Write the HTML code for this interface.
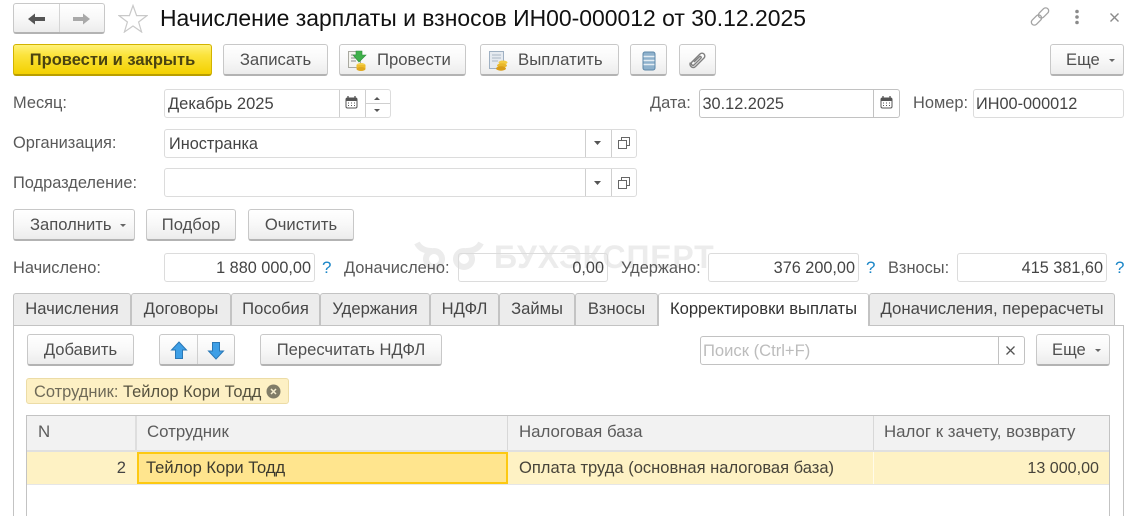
<!DOCTYPE html>
<html lang="ru"><head><meta charset="utf-8"><title>Начисление зарплаты</title>
<style>
html,body{margin:0;padding:0;background:#fff}
#p{position:relative;width:1129px;height:516px;overflow:hidden;background:#fff;font-family:"Liberation Sans",sans-serif;font-size:16.6px;color:#4d4d4d;filter:blur(.35px)}
#p>*{position:absolute;box-sizing:border-box}
.t{white-space:nowrap;line-height:22px}
.l{color:#595959;white-space:nowrap;line-height:22px;font-size:16.4px}
.b{height:32px;border:1px solid #c8c8c8;border-bottom:2px solid #b3b3b3;border-radius:3px;background:linear-gradient(#fff,#f8f8f8 50%,#ececec);text-align:center;line-height:30px;color:#4f4f4f;white-space:nowrap}
.f{height:29px;border:1px solid #dcdcdc;border-radius:3px;background:#fff;line-height:28px;padding:0 3px;color:#444;white-space:nowrap;font-size:16.3px}
.f.r{text-align:right;padding-right:3px;font-size:16.25px}
.d{width:1px;background:#cfcfcf}
.q{color:#1b86c7;line-height:22px;font-size:17px}
.tab{top:293px;height:32px;background:#ececec;border:1px solid #c3c3c3;border-bottom:0;border-radius:3px 3px 0 0;text-align:center;line-height:30px;color:#474747;white-space:nowrap}
.h{color:#5c5c5c;font-size:16.85px}
.v{font-size:16.55px}
.c1{font-size:16.7px}
</style></head><body><div id="p">

<!-- nav -->
<div class="b" style="left:13px;top:3px;width:92px;height:31px"></div>
<div class="d" style="left:59px;top:4px;height:28px;background:#d5d5d5"></div>
<svg style="left:27px;top:11px" width="20" height="16"><path d="M1 8L8 2.500V6H18V10H8V13.500Z" fill="#555"/></svg>
<svg style="left:71px;top:11px" width="20" height="16"><path d="M19 8L12 2.500V6H2V10H12V13.500Z" fill="#a9a9a9"/></svg>
<svg style="left:118px;top:4px" width="30" height="29"><path d="M15 1.500L18.600 11.600H29L20.600 18L23.600 28L15 22L6.400 28L9.400 18L1 11.600H11.400Z" fill="#fff" stroke="#c9c9c9" stroke-width="1.200"/></svg>
<div class="t" style="left:160px;top:4px;font-size:22.930px;line-height:28px;color:#111">Начисление зарплаты и взносов ИН00-000012 от 30.12.2025</div>
<svg style="left:1029px;top:6px" width="22" height="21" fill="none" stroke="#a3a3a3" stroke-width="1.300"><g transform="rotate(-45 11 10.500)"><rect x="0" y="7.500" width="12" height="6" rx="3"/><rect x="10" y="7.500" width="12" height="6" rx="3"/></g></svg>
<svg style="left:1073px;top:9px" width="8" height="16" fill="#8a8a8a"><circle cx="4" cy="2.500" r="1.800"/><circle cx="4" cy="8" r="1.800"/><circle cx="4" cy="13.500" r="1.800"/></svg>
<svg style="left:1109px;top:12px" width="11" height="11" stroke="#8a8a8a" stroke-width="1.400"><path d="M1.500 1.500L9.500 9.500M9.500 1.500L1.500 9.500"/></svg>

<!-- toolbar -->
<div class="b" style="left:13px;top:44px;width:199px;background:linear-gradient(#fff27a,#fbe33c 35%,#f3d000);border-color:#d2b300 #d2b300 #b99e00;font-weight:bold;color:#4a4310;font-size:16.500px">Провести и закрыть</div>
<div class="b c1" style="left:223px;top:44px;width:105px">Записать</div>
<div class="b c1" style="left:339px;top:44px;width:127px;text-align:left;padding-left:37px">Провести</div>
<svg style="left:347px;top:50px" width="22" height="22"><rect x="1.500" y="1.500" width="12" height="16" fill="#f4f4ee" stroke="#a9a9a0"/><path d="M4 5h7M4 8h5M4 11h5" stroke="#888"/><path d="M9 1h6v4h4l-7 7-6-7h3z" fill="#3fb04a" stroke="#2d8e3a" stroke-width=".6"/><ellipse cx="14" cy="15" rx="4.500" ry="2" fill="#f2cf4a"/><rect x="9.500" y="15" width="9" height="4" fill="#eebd2e"/><ellipse cx="14" cy="19" rx="4.500" ry="2" fill="#e0a91e"/></svg>
<div class="b" style="left:480px;top:44px;width:139px;text-align:left;padding-left:37px;font-size:16.800px">Выплатить</div>
<svg style="left:488px;top:50px" width="22" height="22"><rect x="1.500" y="1.500" width="14" height="17" fill="#e5eaf0" stroke="#9fb0c2"/><path d="M4 5h9M4 8h9M4 11h6" stroke="#a9b6c4"/><ellipse cx="15" cy="12.500" rx="4.500" ry="2" fill="#f3cb42"/><ellipse cx="14" cy="15.500" rx="5" ry="2.200" fill="#e9b82c"/><ellipse cx="13" cy="18.500" rx="5" ry="2.200" fill="#d99d18"/></svg>
<div class="b" style="left:630px;top:44px;width:37px"></div>
<svg style="left:642px;top:51px" width="14" height="20"><rect x="1" y="1" width="12" height="18" rx="2" fill="#8eb1cc" stroke="#5d87a8"/><path d="M1.500 5.500h11M1.500 9.500h11M1.500 13.500h11" stroke="#e4edf3" stroke-width="1.400"/></svg>
<div class="b" style="left:679px;top:44px;width:37px"></div>
<svg style="left:688px;top:50px" width="20" height="20" fill="none" stroke="#808080" stroke-width="1.400"><path d="M7 17L16 8a2.800 2.800 0 0 0-4-4L3.500 12.500a1.800 1.800 0 0 0 2.500 2.500L13 8a1 1 0 0 0-1.400-1.400L6 12"/><path d="M7 17a3.300 3.300 0 0 1-4.500-4.500"/></svg>
<div class="b" style="left:1050px;top:44px;width:74px;text-align:left;padding-left:15px">Еще</div>
<svg style="left:1109px;top:59px" width="7" height="4"><path d="M0 0h6L3 3z" fill="#666"/></svg>

<!-- row 1 -->
<div class="l" style="left:13px;top:92px">Месяц:</div>
<div class="f" style="left:164px;top:89px;width:227px;font-size:16.5px">Декабрь 2025</div>
<div class="d" style="left:339px;top:90px;height:27px"></div>
<div class="d" style="left:365px;top:90px;height:27px"></div>
<div class="d" style="left:366px;top:103px;height:1px;width:24px"></div>
<svg style="left:345px;top:96px" width="13" height="13"><rect x="1" y="2" width="11" height="10" rx="1.500" fill="#fff" stroke="#555"/><rect x="1" y="2" width="11" height="3" fill="#555"/><path d="M3 0v3M10 0v3" stroke="#555" stroke-width="1.300"/><path d="M3 7h1M6 7h1M9 7h1M3 9.500h1M6 9.500h1M9 9.500h1" stroke="#555"/></svg>
<svg style="left:374px;top:97px" width="7" height="4"><path d="M3 0L6 3H0z" fill="#555"/></svg>
<svg style="left:374px;top:109px" width="7" height="4"><path d="M0 0h6L3 3z" fill="#555"/></svg>
<div class="l" style="left:650px;top:92px">Дата:</div>
<div class="f" style="left:699px;top:89px;width:201px;border-color:#c2c2c2;padding-left:2.500px">30.12.2025</div>
<div class="d" style="left:873px;top:90px;height:27px;background:#c2c2c2"></div>
<svg style="left:880px;top:96px" width="13" height="13"><rect x="1" y="2" width="11" height="10" rx="1.500" fill="#fff" stroke="#555"/><rect x="1" y="2" width="11" height="3" fill="#555"/><path d="M3 0v3M10 0v3" stroke="#555" stroke-width="1.300"/><path d="M3 7h1M6 7h1M9 7h1M3 9.500h1M6 9.500h1M9 9.500h1" stroke="#555"/></svg>
<div class="l" style="left:913px;top:92px">Номер:</div>
<div class="f" style="left:973px;top:89px;width:151px;padding-left:2px">ИН00-000012</div>

<!-- row 2 -->
<div class="l" style="left:13px;top:132px">Организация:</div>
<div class="f" style="left:164px;top:129px;width:473px;padding-left:4px">Иностранка</div>
<div class="d" style="left:585px;top:130px;height:27px"></div>
<div class="d" style="left:611px;top:130px;height:27px"></div>
<svg style="left:594px;top:141px" width="8" height="5"><path d="M0 0h7L3.500 4z" fill="#555"/></svg>
<svg style="left:617px;top:136px" width="14" height="14" fill="#fff" stroke="#666"><rect x="4.500" y="1.500" width="8" height="8"/><rect x="1.500" y="4.500" width="8" height="8"/></svg>

<!-- row 3 -->
<div class="l" style="left:13px;top:172px">Подразделение:</div>
<div class="f" style="left:164px;top:168px;width:473px"></div>
<div class="d" style="left:585px;top:169px;height:27px"></div>
<div class="d" style="left:611px;top:169px;height:27px"></div>
<svg style="left:594px;top:181px" width="8" height="5"><path d="M0 0h7L3.500 4z" fill="#555"/></svg>
<svg style="left:617px;top:176px" width="14" height="14" fill="#fff" stroke="#666"><rect x="4.500" y="1.500" width="8" height="8"/><rect x="1.500" y="4.500" width="8" height="8"/></svg>

<!-- buttons row -->
<div class="b" style="left:13px;top:209px;width:122px;text-align:left;padding-left:16px">Заполнить</div>
<svg style="left:120px;top:224px" width="7" height="4"><path d="M0 0h6L3 3z" fill="#666"/></svg>
<div class="b" style="left:146px;top:209px;width:90px">Подбор</div>
<div class="b" style="left:248px;top:209px;width:106px">Очистить</div>

<!-- watermark -->
<svg style="left:414px;top:240px" width="70" height="32" fill="none" stroke="#ececec" stroke-width="6"><circle cx="20" cy="19" r="8"/><circle cx="50" cy="19" r="8"/><path d="M3 3c3 6 9 8 15 8M67 3c-3 6-9 8-15 8"/></svg>
<div class="t" style="left:494px;top:240px;font-size:32px;line-height:34px;font-weight:bold;color:#ececec;letter-spacing:.8px">БУХЭКСПЕРТ</div>

<!-- totals -->
<div class="l" style="left:13px;top:257px">Начислено:</div>
<div class="f r" style="left:164px;top:253px;width:151px">1 880 000,00</div>
<div class="q" style="left:322px;top:257px">?</div>
<div class="l" style="left:344px;top:257px">Доначислено:</div>
<div class="f r" style="left:458px;top:253px;width:150px;background:transparent">0,00</div>
<div class="l" style="left:621px;top:257px">Удержано:</div>
<div class="f r" style="left:708px;top:253px;width:151px">376 200,00</div>
<div class="q" style="left:866px;top:257px">?</div>
<div class="l" style="left:888px;top:257px">Взносы:</div>
<div class="f r" style="left:957px;top:253px;width:150px">415 381,60</div>
<div class="q" style="left:1115px;top:257px">?</div>

<!-- panel -->
<div style="left:13px;top:325px;width:1111px;height:200px;border:1px solid #c3c3c3;background:#fff"></div>

<!-- tabs -->
<div class="tab" style="left:13px;width:118px">Начисления</div>
<div class="tab" style="left:131px;width:100px">Договоры</div>
<div class="tab" style="left:231px;width:89px">Пособия</div>
<div class="tab" style="left:320px;width:110px">Удержания</div>
<div class="tab" style="left:430px;width:69px">НДФЛ</div>
<div class="tab" style="left:499px;width:76px">Займы</div>
<div class="tab" style="left:575px;width:83px">Взносы</div>
<div class="tab" style="left:658px;width:211px;height:33px;background:#fff;color:#333;z-index:2;border-top-color:#d5d5d5">Корректировки выплаты</div>
<div class="tab" style="left:869px;width:246px;font-size:16.800px">Доначисления, перерасчеты</div>

<!-- panel toolbar -->
<div class="b" style="left:27px;top:334px;width:107px">Добавить</div>
<div class="b" style="left:159px;top:334px;width:76px"></div>
<div class="d" style="left:197px;top:335px;height:29px"></div>
<svg style="left:170px;top:341px" width="18" height="19"><path d="M9 1L16.500 9H12.500V17.500H5.500V9H1.500Z" fill="#3e9fe6" stroke="#2a78b6"/></svg>
<svg style="left:207px;top:341px" width="18" height="19"><path d="M9 18L16.500 10H12.500V1.500H5.500V10H1.500Z" fill="#3e9fe6" stroke="#2a78b6"/></svg>
<div class="b" style="left:260px;top:334px;width:182px">Пересчитать НДФЛ</div>
<div class="f" style="left:700px;top:336px;width:325px;border-color:#c2c2c2;color:#bcbcbc;padding-left:2px;font-size:16.6px">Поиск (Ctrl+F)</div>
<div class="d" style="left:998px;top:337px;height:27px;background:#c2c2c2"></div>
<svg style="left:1005px;top:345px" width="11" height="11" stroke="#555" stroke-width="1.300"><path d="M1.500 1.500L9.500 9.500M9.500 1.500L1.500 9.500"/></svg>
<div class="b" style="left:1036px;top:334px;width:74px;text-align:left;padding-left:15px">Еще</div>
<svg style="left:1095px;top:349px" width="7" height="4"><path d="M0 0h6L3 3z" fill="#666"/></svg>

<!-- chip -->
<div class="t" style="left:26px;top:378px;width:263px;height:26px;background:#fdf0c4;border:1px solid #ecdca6;border-radius:3px;line-height:26px;padding-left:7px;color:#6f6a58;font-size:16.450px">Сотрудник: <span style="color:#56523f">Тейлор Кори Тодд</span></div>
<svg style="left:266px;top:384px" width="15" height="15"><circle cx="7.500" cy="7.500" r="7" fill="#807c68"/><path d="M5 5l5 5M10 5l-5 5" stroke="#f5edd0" stroke-width="1.500"/></svg>

<!-- table -->
<div style="left:26px;top:415px;width:1084px;height:110px;border:1px solid #c3c3c3;background:#fff"></div>
<div style="left:27px;top:416px;width:1082px;height:35px;background:#f2f2f2"></div>
<div style="left:27px;top:450px;width:1082px;height:2px;background:#e0e0e0"></div>
<div style="left:135px;top:416px;width:2px;height:34px;background:#dedede"></div>
<div style="left:507px;top:416px;width:1px;height:34px;background:#d8d8d8"></div>
<div style="left:873px;top:416px;width:1px;height:34px;background:#d8d8d8"></div>
<div class="t h" style="left:38px;top:421px">N</div>
<div class="t h" style="left:147px;top:421px">Сотрудник</div>
<div class="t h" style="left:519px;top:421px">Налоговая база</div>
<div class="t h" style="left:884px;top:421px">Налог к зачету, возврату</div>

<div style="left:27px;top:452px;width:1082px;height:32px;background:#fef2c4"></div>
<div style="left:27px;top:484px;width:1082px;height:1px;background:#e6e6e6"></div>
<div style="left:873px;top:452px;width:1px;height:32px;background:#fffbe9"></div>
<div style="left:507px;top:452px;width:1px;height:32px;background:#fffbe9"></div>
<div style="left:137px;top:452px;width:371px;height:32px;background:#ffe58e;border:2px solid #fdc911"></div>
<div class="t v" style="left:100px;top:457px;width:26px;text-align:right;color:#444">2</div>
<div class="t v" style="left:146px;top:457px;color:#3c3a2e">Тейлор Кори Тодд</div>
<div class="t v" style="left:519px;top:457px;color:#47443a">Оплата труда (основная налоговая база)</div>
<div class="t" style="left:900px;top:457px;width:199px;text-align:right;color:#47443a;font-size:16.100px">13 000,00</div>
</div></body></html>
